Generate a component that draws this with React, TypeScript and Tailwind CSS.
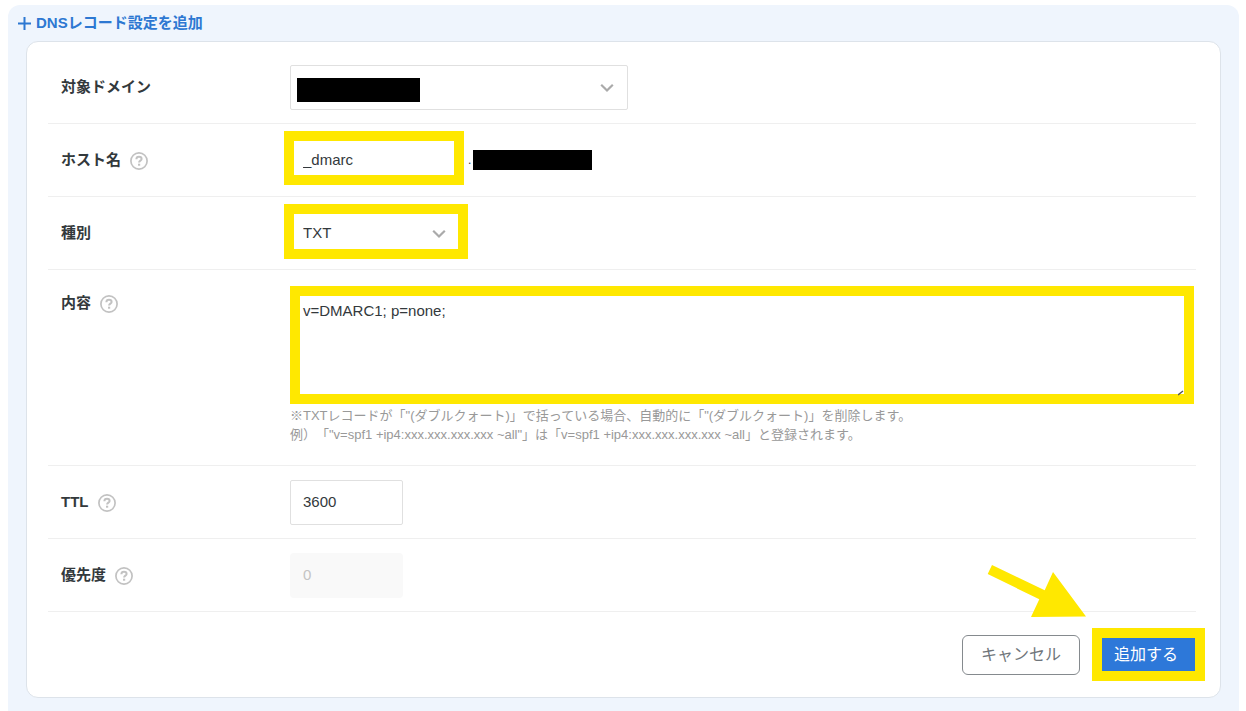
import type { ReactNode } from 'react';

function Highlight({ className }: { className: string }) {
  return <span className={`pointer-events-none absolute border-[10px] border-[#ffe800] ${className}`} />;
}

function Chevron() {
  return (
    <svg className="pointer-events-none absolute right-3.5 top-4 size-3.5" viewBox="0 0 14 14" fill="none" stroke="#aaaaaa" strokeWidth="2.2">
      <path d="M1.2 3.7 7 9.5l5.8-5.8" />
    </svg>
  );
}

function HelpButton({ name }: { name: string }) {
  return (
    <button type="button" aria-label={`${name} ?`} className="mt-0.5">
      <svg className="size-[18px]" viewBox="0 0 18 18" fill="none" stroke="#c2c2c2">
        <circle cx="9" cy="9" r="8.1" strokeWidth="1.7" />
        <path d="M6.4 7.2c0-1.5 1.1-2.4 2.6-2.4s2.6.9 2.6 2.1c0 1.7-2.5 1.8-2.5 3.6" strokeWidth="2" />
        <path d="M8 12.7h2.2" strokeWidth="2" />
      </svg>
    </button>
  );
}

type RowProps = {
  id: string;
  label: string;
  help?: boolean;
  tall?: boolean;
  children: ReactNode;
};

function Row({ id, label, help, tall, children }: RowProps) {
  return (
    <div className={`flex items-start border-b border-[#efefef] pl-[13px] ${tall ? 'pt-4 pb-[21px]' : 'pt-3.5 pb-[13px]'}`}>
      <div className={`flex w-[229px] shrink-0 items-center gap-[9px] ${tall ? 'h-[34px]' : 'h-11'}`}>
        <label htmlFor={id} className="font-bold">{label}</label>
        {help && <HelpButton name={label} />}
      </div>
      {children}
    </div>
  );
}

const field = 'block h-[45px] w-full appearance-none rounded-xs border border-[#e0e0e0] bg-white px-3 pb-0.5 outline-none';

export default function App() {
  return (
    <div className={'min-h-screen bg-white pt-[5px] pr-[7px] pl-2 font-["Liberation_Sans","Noto_Sans_CJK_JP",sans-serif] text-[15px] leading-5 text-[#33393c]'}>
      <section className="rounded-t-xl bg-[#eff5fd] px-[18px] pb-[13px]">
        <h1 className="-ml-2 flex h-9 items-center gap-[5px] font-bold text-[#2d78d2]">
          <svg className="size-[13px]" viewBox="0 0 13 13" stroke="currentColor" strokeWidth="2">
            <path d="M6.5 0v13M0 6.5h13" />
          </svg>
          DNSレコード設定を追加
        </h1>

        <form className="rounded-xl border border-[#dde3ea] bg-white pt-[9px] pr-6 pb-[22px] pl-[21px]" onSubmit={(e) => e.preventDefault()}>
          <Row id="domain" label="対象ドメイン">
            <div className="relative w-[338px]">
              <select id="domain" className={field}>
                <option></option>
              </select>
              <span className="pointer-events-none absolute top-[13px] left-[7px] h-6 w-[123px] bg-black" />
              <Chevron />
            </div>
          </Row>

          <Row id="host" label="ホスト名" help>
            <div className="relative w-[170px]">
              <input id="host" className={field} defaultValue="_dmarc" />
              <Highlight className="-top-[7px] -right-1 -bottom-0.5 -left-1.5" />
            </div>
            <div className="ml-2 flex h-11 items-center">
              <span className="text-xs">.</span>
              <span className="ml-0.5 h-5 w-[119px] bg-black" />
            </div>
          </Row>

          <Row id="type" label="種別">
            <div className="relative w-[170px]">
              <select id="type" className={field}>
                <option>TXT</option>
              </select>
              <Chevron />
              <Highlight className="-top-[7px] -right-2 -bottom-[3px] -left-1.5" />
            </div>
          </Row>

          <Row id="content" label="内容" help tall>
            <div className="mr-0.5 flex-1">
              <div className="relative">
                <textarea
                  id="content"
                  className="block h-[118px] w-full resize-none bg-white px-[13px] pt-[15px] outline-none"
                  defaultValue="v=DMARC1; p=none;"
                />
                <Highlight className="inset-0" />
                <svg className="pointer-events-none absolute right-2.5 bottom-2 size-1.5" viewBox="0 0 6 6" stroke="#555555" strokeWidth="1.4">
                  <path d="M0 5 5 1" />
                </svg>
              </div>
              <p className="mt-0.5 text-[13px] leading-[19px] text-[#999999] [text-spacing-trim:space-all]">
                ※TXTレコードが「"(ダブルクォート)」で括っている場合、自動的に「"(ダブルクォート)」を削除します。
                <br />
                例）「"v=spf1 +ip4:xxx.xxx.xxx.xxx ~all"」は「v=spf1 +ip4:xxx.xxx.xxx.xxx ~all」と登録されます。
              </p>
            </div>
          </Row>

          <Row id="ttl" label="TTL" help>
            <div className="w-[113px]">
              <input id="ttl" className={field} defaultValue="3600" />
            </div>
          </Row>

          <Row id="priority" label="優先度" help>
            <div className="w-[113px]">
              <input
                id="priority"
                className="block h-[45px] w-full rounded-sm bg-[#f9f9f9] px-[13px] pb-0.5 text-[#c4c4c4]"
                defaultValue="0"
                disabled
              />
            </div>
          </Row>

          <div className="flex justify-end gap-4 pt-[23px] text-base">
            <button type="button" className="h-10 rounded-md border border-[#858a8e] px-[18px] text-[#6f757a]">
              キャンセル
            </button>
            <div className="relative">
              <button type="submit" className="h-10 bg-[#2d78d9] px-[18px] text-white">
                追加する
              </button>
              <Highlight className="-top-[7px] -right-[9px] -bottom-1.5 -left-1" />
              <svg className="pointer-events-none absolute right-[109px] bottom-[58px] h-[52px] w-[100px]" viewBox="0 0 100 52" fill="#ffe800">
                <path d="M5 0 57.7 25.3 66 7l33 44.5-55 .5 8.3-17.7L.7 9z" />
              </svg>
            </div>
          </div>
        </form>
      </section>
    </div>
  );
}
